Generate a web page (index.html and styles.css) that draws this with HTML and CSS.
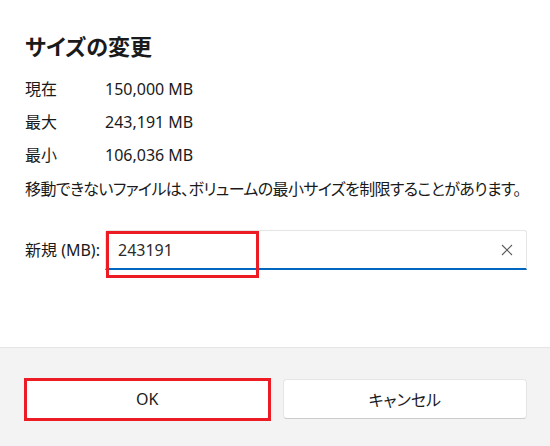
FILE: index.html
```html
<!DOCTYPE html>
<html lang="ja">
<head>
<meta charset="utf-8">
<title>サイズの変更</title>
<link rel="stylesheet" href="styles.css">
</head>
<body>
<div class="dialog">
  <main class="content">
    <h1 class="title">サイズの変更</h1>
    <dl class="info">
      <dt>現在</dt><dd>150,000 MB</dd>
      <dt>最大</dt><dd>243,191 MB</dd>
      <dt>最小</dt><dd>106,036 MB</dd>
    </dl>
    <p class="note">移動できないファイルは、ボリュームの最小サイズを制限することがあります。</p>
    <div class="field-row">
      <label class="field-label" for="size">新規 (MB):</label>
      <div class="input">
        <input id="size" class="input-text" type="text" value="243191">
        <span class="clear">
          <svg width="12" height="12" viewBox="0 0 12 12"><path d="M1 1 L11 11 M11 1 L1 11" stroke="#5c5c5c" stroke-width="1.1" fill="none"/></svg>
        </span>
      </div>
    </div>
  </main>
  <footer class="footer">
    <button class="btn">OK</button>
    <button class="btn">キャンセル</button>
  </footer>
  <div class="mark mark-input"></div>
  <div class="mark mark-ok"></div>
</div>
</body>
</html>
```
FILE: styles.css
```css
* { box-sizing: border-box; }
html, body { margin: 0; padding: 0; background: #ffffff; }
body {
  font-family: "Noto Sans", "Noto Sans CJK JP", sans-serif;
  font-feature-settings: "palt";
  color: #1a1a1a;
  font-size: 16px;
}
.dialog {
  position: relative;
  width: 550px;
  height: 446px;
  display: flex;
  flex-direction: column;
  overflow: hidden;
}
.content {
  flex: 1;
  padding: 32px 23px 0 25px;
}
.title {
  margin: 0;
  font-size: 22px;
  font-weight: 600;
  line-height: 28px;
  color: #1a1a1a;
}
.info {
  margin: 12px 0 0;
  display: grid;
  grid-template-columns: 80px auto;
  grid-auto-rows: 33px;
  align-items: center;
}
.info dt, .info dd { margin: 0; line-height: 20px; }
.note {
  margin: 2px 0 0;
  line-height: 33px;
  font-size: 16px;
  white-space: nowrap;
  letter-spacing: -0.62px;
}
.field-row {
  margin-top: 24px;
  display: flex;
  align-items: center;
}
.field-label {
  width: 80px;
  line-height: 20px;
  white-space: nowrap;
}
.input {
  flex: 1;
  height: 40px;
  display: flex;
  align-items: center;
  background: #fff;
  border: 1px solid #e5e5e5;
  border-bottom: 2px solid #0067c0;
  border-radius: 3px 3px 0 0;
}
.input-text {
  flex: 1;
  border: 0;
  outline: none;
  background: transparent;
  font: inherit;
  font-size: 16px;
  color: #2b2b2b;
  padding: 0 0 0 12px;
  height: 36px;
}
.clear {
  width: 38px;
  display: flex;
  justify-content: center;
  align-items: center;
}
.clear svg { display: block; }
.footer {
  height: 99px;
  background: #f3f3f3;
  border-top: 1px solid #e5e5e5;
  padding: 31px 23px 0 25px;
  display: grid;
  grid-template-columns: 1fr 1fr;
  column-gap: 13px;
  align-content: start;
}
.btn {
  height: 40px;
  background: #ffffff;
  border: 1px solid #e5e5e5;
  border-bottom-color: #cccccc;
  border-radius: 4px;
  font: inherit;
  font-size: 16px;
  color: #1b1b1b;
  padding: 0;
}
.mark {
  position: absolute;
  border: 3px solid #ed1c24;
  pointer-events: none;
}
.mark-input { left: 106px; top: 231px; width: 153px; height: 47px; }
.mark-ok { left: 24px; top: 378px; width: 247px; height: 43px; }
```
